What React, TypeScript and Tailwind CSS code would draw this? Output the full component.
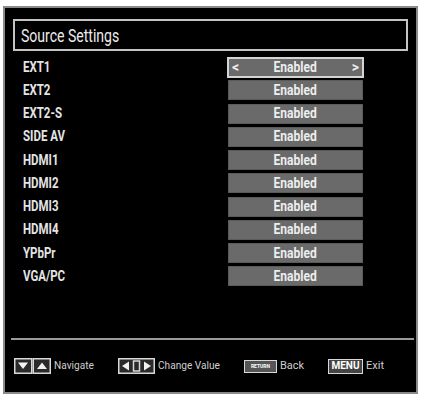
import React from "react";

const rows = ["EXT1", "EXT2", "EXT2-S", "SIDE AV", "HDMI1", "HDMI2", "HDMI3", "HDMI4", "YPbPr", "VGA/PC"];

const font = { fontFamily: 'Roboto, "Liberation Sans", sans-serif' };

function NavIcon() {
  return (
    <svg width="37" height="16" viewBox="0 0 37 16">
      <rect x="0.75" y="0.75" width="17" height="14.5" fill="#2a2a2a" stroke="#d8d8d8" strokeWidth="1.5" />
      <polygon points="4,4.5 14,4.5 9,11" fill="#f2f2f2" />
      <rect x="19.25" y="0.75" width="17" height="14.5" fill="#2a2a2a" stroke="#d8d8d8" strokeWidth="1.5" />
      <polygon points="23,11 33,11 28,4.5" fill="#f2f2f2" />
    </svg>
  );
}

function LRIcon() {
  return (
    <svg width="37" height="16" viewBox="0 0 37 16">
      <rect x="0.75" y="0.75" width="35.5" height="14.5" fill="#2a2a2a" stroke="#d8d8d8" strokeWidth="1.5" />
      <polygon points="11,3.5 11,12.5 4,8" fill="#f2f2f2" />
      <rect x="15.5" y="3" width="6" height="10" fill="none" stroke="#d8d8d8" strokeWidth="1.5" />
      <polygon points="26,3.5 26,12.5 33,8" fill="#f2f2f2" />
    </svg>
  );
}

export default function App() {
  return (
    <div className="w-[421px] h-[395px] bg-white pt-[6px] pl-[3px]" style={font}>
      <div className="w-[415px] h-[388px] bg-black border-2 border-[#8a8a8a] flex flex-col">
        <div className="mt-[11px] mx-[8px] h-[32px] border-2 border-[#c4c4c4] flex items-center pl-[6px]">
          <span className="inline-block origin-left scale-x-[0.78] text-[18px] text-[#ececec]">Source Settings</span>
        </div>
        <div className="mt-[6px] flex flex-col gap-[3.25px]">
          {rows.map((r, i) => (
            <div key={r} className="flex items-center h-[20px]">
              <div className="w-[223px] pl-[18px] text-[14px] font-bold text-[#e4e4e4]">
                <span className="inline-block origin-left scale-x-[0.82]">{r}</span>
              </div>
              {i === 0 ? (
                <div className="w-[137px] h-[21px] -ml-[1px] border-2 border-[#d4d4d4] bg-[#6a6a6a] flex items-center justify-between px-[3px] text-[14px] font-bold text-[#ededed]">
                  <span>&lt;</span>
                  <span className="inline-block scale-x-[0.86]">Enabled</span>
                  <span>&gt;</span>
                </div>
              ) : (
                <div className="w-[135px] h-[20px] bg-[#6a6a6a] border border-[#5a5a5a] flex items-center justify-center text-[14px] font-bold text-[#ededed]">
                  <span className="inline-block scale-x-[0.86]">Enabled</span>
                </div>
              )}
            </div>
          ))}
        </div>
        <div className="flex-1" />
        <div className="ml-[6px] mr-[2px] h-[2px] bg-[#9a9a9a]" />
        <div className="flex-1 flex items-center pl-[9px] text-[11px] text-[#cfcfcf]">
          <div className="w-[104px] flex items-center gap-[3px]">
            <NavIcon />
            <span className="inline-block origin-left scale-x-[0.92]">Navigate</span>
          </div>
          <div className="w-[126px] flex items-center gap-[3px]">
            <LRIcon />
            <span className="inline-block origin-left scale-x-[0.92]">Change Value</span>
          </div>
          <div className="w-[84px] flex items-center gap-[3px]">
            <div className="w-[33px] h-[13px] border-[1.5px] border-[#d8d8d8] bg-[#555] flex items-center justify-center text-[5px] leading-none font-bold text-white">
              RETURN
            </div>
            <span>Back</span>
          </div>
          <div className="flex items-center gap-[3px]">
            <div className="w-[35px] h-[15px] border-[1.5px] border-[#d8d8d8] bg-[#444] flex items-center justify-center text-[10px] leading-none font-bold text-white">
              MENU
            </div>
            <span>Exit</span>
          </div>
        </div>
      </div>
    </div>
  );
}
